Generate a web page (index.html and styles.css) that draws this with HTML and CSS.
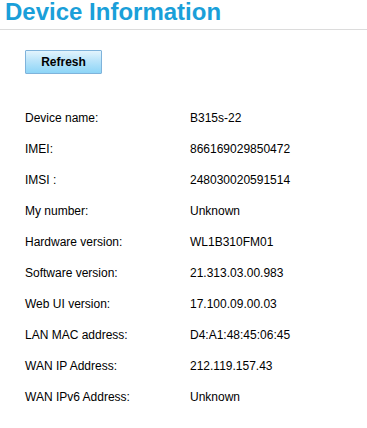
FILE: index.html
```html
<!DOCTYPE html>
<html lang="en">
<head>
    <meta charset="UTF-8">
    <meta name="viewport" content="width=device-width, initial-scale=1.0">
    <title>Device Information</title>
    <link rel="stylesheet" href="styles.css">
</head>
<body>
    <header class="page-header">
        <h1>Device Information</h1>
    </header>
    <div class="content">
        <div class="toolbar">
            <button class="btn-refresh">Refresh</button>
        </div>
        <table class="info-table">
            <tr><td class="label">Device name:</td><td>B315s-22</td></tr>
            <tr><td class="label">IMEI:</td><td>866169029850472</td></tr>
            <tr><td class="label">IMSI :</td><td>248030020591514</td></tr>
            <tr><td class="label">My number:</td><td>Unknown</td></tr>
            <tr><td class="label">Hardware version:</td><td>WL1B310FM01</td></tr>
            <tr><td class="label">Software version:</td><td>21.313.03.00.983</td></tr>
            <tr><td class="label">Web UI version:</td><td>17.100.09.00.03</td></tr>
            <tr><td class="label">LAN MAC address:</td><td>D4:A1:48:45:06:45</td></tr>
            <tr><td class="label">WAN IP Address:</td><td>212.119.157.43</td></tr>
            <tr><td class="label">WAN IPv6 Address:</td><td>Unknown</td></tr>
        </table>
    </div>
</body>
</html>
```

FILE: styles.css
```css
body {
    font-family: "Liberation Sans", Arial, sans-serif;
    margin: 0;
    padding: 0;
    background-color: #fff;
    color: #000;
}
.page-header {
    height: 29px;
    border-bottom: 1px solid #dcdcdc;
    padding-left: 5px;
}
.page-header h1 {
    margin: 0;
    font-size: 24px;
    line-height: 24px;
    font-weight: bold;
    color: #1a9fd9;
}
.content {
    padding: 20px 0 0 25px;
}
.toolbar {
    height: 24px;
    margin-bottom: 29px;
}
.btn-refresh {
    width: 77px;
    height: 24px;
    padding: 0;
    font-family: "Liberation Sans", Arial, sans-serif;
    font-size: 12px;
    font-weight: bold;
    color: #000;
    border: 1px solid #7fb3db;
    border-radius: 1px;
    background: linear-gradient(to bottom, #e3f4fd 0%, #b9e4fa 45%, #8dd5f7 100%);
    cursor: pointer;
}
.info-table {
    border-collapse: collapse;
    font-size: 12px;
}
.info-table td {
    padding: 0;
    height: 31px;
    line-height: 31px;
    white-space: nowrap;
}
.info-table td.label {
    width: 165px;
}
```
